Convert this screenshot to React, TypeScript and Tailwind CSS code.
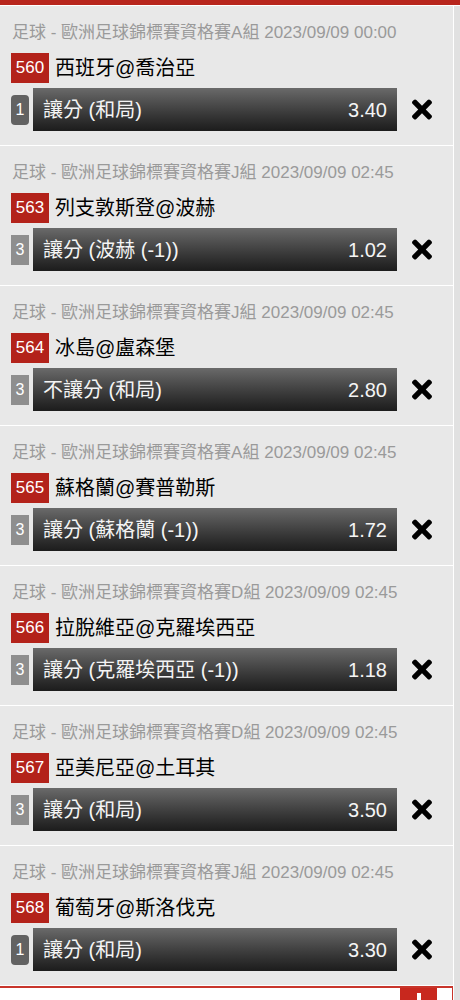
import React from 'react';
import { FaTimes } from 'react-icons/fa';

interface Bet {
  group: string;
  time: string;
  no: string;
  match: string;
  qty: string;
  pick: string;
  odds: string;
}

const bets: Bet[] = [
  { group: 'A', time: '00:00', no: '560', match: '西班牙@喬治亞', qty: '1', pick: '讓分 (和局)', odds: '3.40' },
  { group: 'J', time: '02:45', no: '563', match: '列支敦斯登@波赫', qty: '3', pick: '讓分 (波赫 (-1))', odds: '1.02' },
  { group: 'J', time: '02:45', no: '564', match: '冰島@盧森堡', qty: '3', pick: '不讓分 (和局)', odds: '2.80' },
  { group: 'A', time: '02:45', no: '565', match: '蘇格蘭@賽普勒斯', qty: '3', pick: '讓分 (蘇格蘭 (-1))', odds: '1.72' },
  { group: 'D', time: '02:45', no: '566', match: '拉脫維亞@克羅埃西亞', qty: '3', pick: '讓分 (克羅埃西亞 (-1))', odds: '1.18' },
  { group: 'D', time: '02:45', no: '567', match: '亞美尼亞@土耳其', qty: '3', pick: '讓分 (和局)', odds: '3.50' },
  { group: 'J', time: '02:45', no: '568', match: '葡萄牙@斯洛伐克', qty: '1', pick: '讓分 (和局)', odds: '3.30' },
];

const BetCard: React.FC<{ bet: Bet }> = ({ bet }) => {
  return (
    <div className="bg-[#e8e8e8] border-b border-white pt-[17px] pb-[14px]">
      {/* League + kickoff */}
      <div className="pl-[12px] h-[20px] leading-[20px] text-[17px] text-[#9a9a9a] whitespace-nowrap">
        足球 - 歐洲足球錦標賽資格賽{bet.group}組 2023/09/09 {bet.time}
      </div>

      {/* Match */}
      <div className="mt-[10px] pl-[11px] flex items-center h-[30px]">
        <div className="w-[38px] h-[30px] bg-[#b3221a] text-white text-[17px] flex items-center justify-center">
          {bet.no}
        </div>
        <div className="ml-[6px] text-[20px] text-black leading-[30px] whitespace-nowrap">{bet.match}</div>
      </div>

      {/* Selection */}
      <div className="mt-[5px] pl-[11px] flex items-center h-[43px]">
        <div
          className={
            bet.qty === '1'
              ? 'w-[18px] h-[30px] rounded-[4px] bg-[#626262] text-white text-[16px] flex items-center justify-center'
              : 'w-[18px] h-[30px] bg-[#8e8e8e] text-white text-[16px] flex items-center justify-center'
          }
        >
          {bet.qty}
        </div>
        <div className="ml-[4px] w-[364px] h-[43px] bg-gradient-to-b from-[#6a6a6a] to-[#1c1c1c] flex items-center justify-between pl-[10px] pr-[10px] text-[#f4f4f4] text-[20px] whitespace-nowrap">
          <span>{bet.pick}</span>
          <span>{bet.odds}</span>
        </div>
        <div className="ml-[14px] w-[22px] flex items-center justify-center text-black">
          <FaTimes size={29} />
        </div>
      </div>
    </div>
  );
};

const App: React.FC = () => {
  return (
    <div
      className="w-[460px] h-[1000px] overflow-hidden bg-[#e8e8e8]"
      style={{ fontFamily: '"Liberation Sans", "Noto Sans CJK TC", sans-serif' }}
    >
      {/* Top bar */}
      <div className="h-[5px] bg-[#b8261d] border-b border-white box-content"></div>

      <div className="flex">
        <div className="w-[453px]">
          {bets.map((bet) => (
            <BetCard key={bet.no} bet={bet} />
          ))}

          {/* Footer */}
          <div className="h-[20px] bg-white border-t-2 border-r border-[#c8352b] flex justify-end pr-[15px]">
            <div className="w-[37px] h-[20px] bg-[#c8281e] flex justify-center pt-[5px]">
              <div className="w-[4px] h-[10px] bg-white"></div>
            </div>
          </div>
        </div>

        {/* Right strip */}
        <div className="w-[7px] h-[1000px] border-l border-white bg-[#e1e1e1]"></div>
      </div>
    </div>
  );
};

export default App;
